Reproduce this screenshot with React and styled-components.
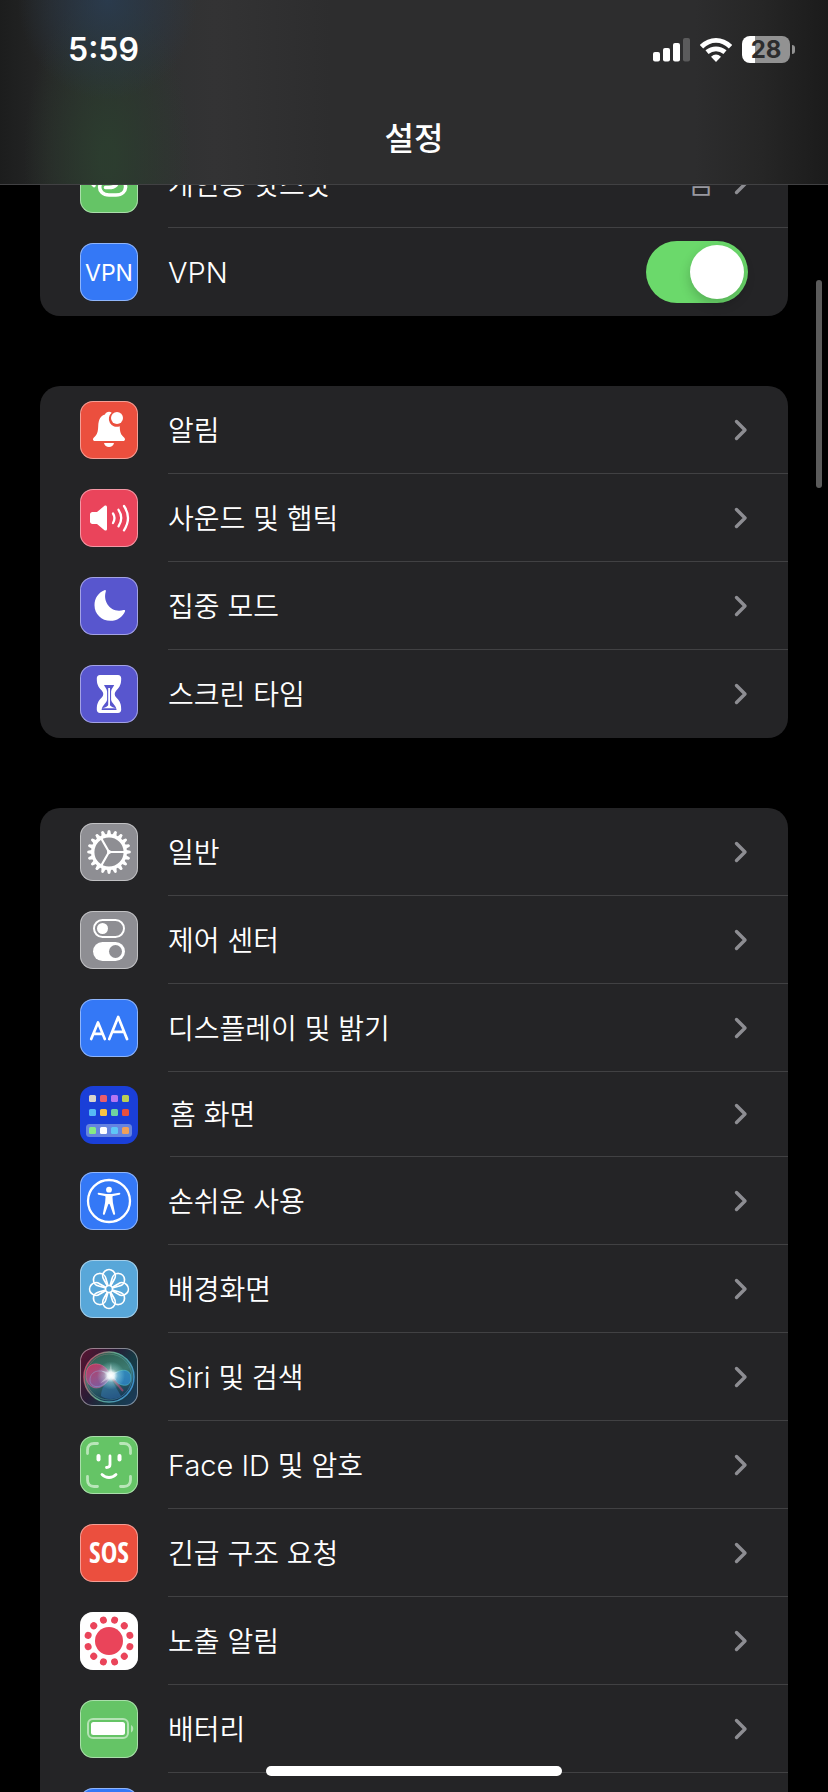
import styled, { createGlobalStyle } from "styled-components";
import { useState } from "react";

const GlobalStyle = createGlobalStyle`
  * {
    box-sizing: border-box;
  }
  body {
    margin: 0;
    background-color: #000;
    color: #fff;
    font-family: Inter, "Noto Sans CJK KR", sans-serif;
  }
`
const Screen = styled.div`
  height: 100vh;
  overflow: hidden;
`
const Header = styled.header`
  position: fixed;
  top: 0;
  left: 0;
  right: 0;
  z-index: 2;
  border-bottom: solid 1px #414143;
  background:
    radial-gradient(ellipse 90px 100px at 13% 0, rgba(42, 60, 80, 0.9), transparent),
    radial-gradient(ellipse 84px 170px at 13% 86%, rgba(44, 62, 47, 0.9) 10%, transparent),
    linear-gradient(90deg, #1c1d1d 0, #262727 6%, #303132 20%, #333334 26%, #2d2d2e 40%, #2d2d2e 84%, #262626 92%, #1b1b1b 100%);
`
const StatusBar = styled.div`
  display: flex;
  align-items: center;
  justify-content: space-between;
  height: 99px;
  padding: 0 33px 0 68px;
`
const Time = styled.time`
  font-size: 32px;
  font-weight: 600;
`
const StatusIcons = styled.div`
  display: flex;
  align-items: center;
  gap: 10px;
`
const BatteryLevel = styled.div`
  display: flex;
  align-items: center;
  gap: 2px;
`
const BatteryBox = styled.div`
  display: flex;
  align-items: center;
  justify-content: center;
  width: 48px;
  height: 27px;
  border-radius: 8px;
  background: linear-gradient(90deg, #fff 28%, #929292 28%);
  color: #2c2c2d;
  font-size: 24px;
  font-weight: 700;
  line-height: 27px;
`
const BatteryNub = styled.div`
  width: 3px;
  height: 9px;
  border-radius: 0 4px 4px 0;
  background-color: #929292;
`
const Title = styled.h1`
  margin: 0;
  padding-bottom: 5px;
  font-size: 32px;
  font-weight: 500;
  line-height: 80px;
  text-align: center;
`
const List = styled.main`
  height: 100%;
  overflow-y: auto;
  padding: 140px 40px 0;
  scrollbar-width: none;
`
const Group = styled.ul`
  margin: 0 0 70px;
  padding: 0;
  list-style: none;
  border-radius: 20px;
  background-color: #242426;
  overflow: hidden;
`
const Row = styled.li`
  .row {
    display: flex;
    align-items: center;
    gap: ${(props) => (props.$compact ? "32px" : "30px")};
    height: ${(props) => (props.$compact ? "85px" : "88px")};
    padding-left: 40px;
    color: inherit;
    text-decoration: none;
  }
  &:last-child .body {
    border-bottom-color: transparent;
  }
`
const Body = styled.span`
  display: flex;
  align-items: center;
  gap: 20px;
  flex: 1;
  height: 100%;
  padding-right: 40px;
  border-bottom: solid 1px #414143;
`
const Label = styled.span`
  flex: 1;
  padding-top: 2px;
  font-size: 28px;
  font-weight: 350;
  line-height: 40px;
`
const Latin = styled.span`
  font-size: 29px;
`
const Value = styled.span`
  color: #98989f;
  font-size: 28px;
  font-weight: 350;
  line-height: 40px;
`
const Tile = styled.span`
  display: flex;
  width: 58px;
  height: 58px;
  border-radius: 13px;
  background: ${(props) => props.$bg};
  box-shadow: inset 0 0 0 1px ${(props) => (props.$plain ? "transparent" : "rgba(255, 255, 255, 0.45)")};
  overflow: hidden;
`
const Switch = styled.input`
  appearance: none;
  display: flex;
  align-items: center;
  width: 102px;
  height: 62px;
  margin: 0;
  padding: 4px;
  border-radius: 31px;
  background-color: ${(props) => (props.checked ? "#6bd96b" : "#39393d")};
  justify-content: ${(props) => (props.checked ? "flex-end" : "flex-start")};
  cursor: pointer;
  &::before {
    content: "";
    width: 54px;
    height: 54px;
    border-radius: 50%;
    background-color: #fff;
    box-shadow: 0 5px 12px rgba(0, 0, 0, 0.2);
  }
`
const ScrollThumb = styled.div`
  position: fixed;
  top: 280px;
  right: 6px;
  z-index: 3;
  width: 6px;
  height: 208px;
  border-radius: 3px;
  background-color: #5b5b5b;
`
const HomeIndicator = styled.div`
  position: fixed;
  bottom: 16px;
  left: 50%;
  z-index: 3;
  width: 296px;
  height: 10px;
  margin-left: -148px;
  border-radius: 5px;
  background-color: #fff;
`

const Icon = ({ children }) => (
  <svg width="58" height="58" viewBox="0 0 58 58" fill="none" aria-hidden="true">{children}</svg>
)

const Hotspot = () => (
  <Icon>
    <g stroke="#fff" strokeWidth="3.600" strokeLinecap="round">
      <path d="M33 24H29C16.500 24 16.500 40 29 40H36C48.500 40 48.500 24 38 24" />
      <path d="M25.500 32.500H29C41.500 32.500 41.500 17 29 17H22C10.500 17 10 27 14 30.500" />
    </g>
  </Icon>
)
const VpnIcon = () => (
  <Icon>
    <text x="29" y="38" textAnchor="middle" fill="#fff" fontFamily="Inter, sans-serif" fontSize="23">VPN</text>
  </Icon>
)
const Bell = () => (
  <Icon>
    <path fill="#fff" d="M13 38.500c0-1.500 1-2.300 2.400-3.600 2.300-2.200 2.600-5.400 2.800-9.400C18.500 17.500 21 14.500 25 13.500c.6-1.800 2.300-2.700 4-2.700 1 0 2 .3 2.700.9a8 8 0 0 0 8 13.600c.2 4.700.6 7.500 2.900 9.600 1.400 1.300 2.400 2.100 2.400 3.600 0 .9-.7 1.500-1.800 1.500H14.800c-1.100 0-1.800-.6-1.800-1.500z" />
    <path fill="#fff" d="M24 42h10c-.6 2.500-2.500 4-5 4s-4.400-1.500-5-4z" />
    <circle cx="37" cy="17" r="6" fill="#fff" />
  </Icon>
)
const Speaker = () => (
  <Icon>
    <path fill="#fff" d="M12.500 23H17l7.500-6.200c1-.8 2.500-.3 2.500 1.200v22c0 1.500-1.500 2-2.500 1.200L17 35h-4.500c-1.500 0-2.500-1-2.500-2.500v-7c0-1.500 1-2.500 2.500-2.500z" />
    <g stroke="#fff" strokeWidth="2.300" strokeLinecap="round">
      <path d="M33 24.500q3 4.500 0 9.500" />
      <path d="M38.500 20.800q5.500 8 0 16.500" />
      <path d="M44 17q8 12 0 24.300" />
    </g>
  </Icon>
)
const Moon = () => (
  <Icon>
    <path fill="#fff" d="M24.500 13.200c.9-.4 1.700.4 1.300 1.300C22.500 25 31 36.500 43.500 33c1.300-.4 2 .3 1.500 1.400C42.500 40 37 43.800 30.500 43.800 21.500 43.800 14.500 37 14.500 28.200c0-6.900 3.900-12.700 10-15z" />
  </Icon>
)
const Hourglass = () => (
  <Icon>
    <path fill="#fff" d="M20 10h18c2 0 3.200 1.300 3.200 3.200 0 6-1.200 8.300-4.700 12-2.400 2.500-2.400 5.100 0 7.600 3.500 3.700 4.700 6 4.700 12 0 1.900-1.200 3.200-3.200 3.200H20c-2 0-3.200-1.300-3.200-3.200 0-6 1.200-8.300 4.700-12 2.400-2.500 2.400-5.100 0-7.600-3.500-3.700-4.700-6-4.700-12C16.800 11.300 18 10 20 10z" />
    <path fill="#5856ce" d="M24 20h10.200c-.8 2-2.900 3.500-3.100 6.500v8c.2 3.500 5 5.500 5.500 10.500H21.600c.5-5 5.300-7 5.500-10.500v-8C26.900 23.500 24.800 22 24 20z" />
    <path stroke="#fff" strokeWidth="1.800" d="M29.100 23v18" />
    <path fill="#fff" d="M22 43.300c3-.5 5.500-1.800 7.100-3.800 1.600 2 4.100 3.300 7.100 3.800z" />
  </Icon>
)
const Gear = () => (
  <Icon>
    <circle cx="29" cy="29" r="16.300" stroke="#fff" strokeWidth="3.400" />
    {Array.from({ length: 20 }, (_, i) => (
      <path key={i} fill="#fff" transform={`rotate(${i * 18} 29 29)`} d="M45.500 26.700l4.700 1q1.600 1.300 0 2.600l-4.700 1z" />
    ))}
    <path stroke="#fff" strokeWidth="2.200" d="M29 29h16M29 29l-8-14M29 29l-8 14" />
    <circle cx="29" cy="29" r="2" fill="#fff" />
  </Icon>
)
const Controls = () => (
  <Icon>
    <rect x="14" y="9" width="30" height="17" rx="8.500" stroke="#fff" strokeWidth="2" />
    <circle cx="22.500" cy="17.500" r="5.500" fill="#fff" />
    <rect x="13" y="31" width="32" height="19" rx="9.500" fill="#fff" />
    <circle cx="35.500" cy="40.500" r="6.500" fill="#8e8e93" />
  </Icon>
)
const TextSize = () => (
  <Icon>
    <g stroke="#fff" strokeLinecap="round" strokeLinejoin="round" strokeWidth="2.700">
      <path d="M11.200 40l6.800-16.500L24.800 40M13.400 34.800h9.200" />
      <path d="M29.300 40L38.200 18l8.800 22M32.300 32.800h11.800" />
    </g>
  </Icon>
)
const dots = [
  ["#d9d5cc", "#e85d6c", "#b476f2", "#b9cf55"],
  ["#56b9f5", "#f7c244", "#6fd3a0", "#e84f3d"],
  ["#86e985", "#fff", "#5ec5f7", "#f0a05a"],
]
const HomeScreen = () => (
  <Icon>
    <rect x="6" y="38" width="46" height="13" rx="3.500" fill="#6684e0" />
    {dots.map((line, y) => line.map((color, x) => (
      <rect key={color} x={9 + x * 11} y={[9, 23, 41][y]} width="7" height="7" rx="1.500" fill={color} />
    )))}
  </Icon>
)
const Accessibility = () => (
  <Icon>
    <circle cx="29" cy="29" r="21" stroke="#fff" strokeWidth="2.300" />
    <circle cx="29" cy="17.700" r="2.900" fill="#fff" />
    <path fill="#fff" d="M18.700 20.800l7.500 1.100q2.800.3 5.600 0l7.500-1.100c1.300-.1 1.400 1.600.2 1.900l-6.200 1.200c-.8.200-.9.600-.8 1.500l.4 5 2.200 11c.3 1.500-1.500 1.900-2 .5l-3.300-9.500q-.8-1.200-1.600 0l-3.300 9.500c-.5 1.400-2.300 1-2-.5l2.200-11 .4-5c.1-.9 0-1.300-.8-1.500l-6.200-1.200c-1.200-.3-1.100-2 .2-1.900z" />
  </Icon>
)
// eight petals, each a full loop from the hub
const Flower = () => (
  <Icon>
    {Array.from({ length: 8 }, (_, i) => (
      <path key={i} stroke="#fff" strokeWidth="1.700" transform={`rotate(${i * 45} 29 29)`} d="M27.500 26L23.800 19.500A6.300 6.300 0 1 1 34.200 19.500L30.500 26" />
    ))}
    <circle cx="29" cy="29" r="3.500" stroke="#fff" strokeWidth="1.700" />
  </Icon>
)
const Siri = () => (
  <Icon>
    <defs>
      <radialGradient id="glow">
        <stop offset="0" stopColor="#fff" />
        <stop offset="0.250" stopColor="#f2fdff" stopOpacity="0.900" />
        <stop offset="0.500" stopColor="#c8f0f0" stopOpacity="0.400" />
        <stop offset="1" stopColor="#9ff" stopOpacity="0" />
      </radialGradient>
      <linearGradient id="ring" x1="0" y1="0.300" x2="1" y2="0.700">
        <stop offset="0" stopColor="#c24a68" />
        <stop offset="0.450" stopColor="#5fa88c" />
        <stop offset="1" stopColor="#3d8fd0" />
      </linearGradient>
      <linearGradient id="orb" x1="0.300" y1="0" x2="0.600" y2="1">
        <stop offset="0" stopColor="#2c5c4e" />
        <stop offset="0.450" stopColor="#3c7a70" />
        <stop offset="1" stopColor="#122f52" />
      </linearGradient>
      <linearGradient id="lobe" x1="0" y1="0" x2="0.500" y2="1">
        <stop offset="0" stopColor="#d8305c" />
        <stop offset="1" stopColor="#8a5aa8" />
      </linearGradient>
    </defs>
    <circle cx="29" cy="29" r="25" fill="url(#orb)" stroke="url(#ring)" strokeWidth="1.500" />
    <circle cx="29" cy="29" r="23" stroke="url(#ring)" strokeOpacity="0.500" />
    <path fill="#3c86cf" fillOpacity="0.400" d="M30 29c-5 6-9 12-9 19 5 4 14 4 20 0z" />
    <path fill="url(#lobe)" fillOpacity="0.850" stroke="#e8809a" strokeOpacity="0.500" strokeWidth="0.800" d="M31 28C25 12 6 12 6 27s16 19 25 1z" />
    <path stroke="#8fa8e0" strokeOpacity="0.600" strokeWidth="0.800" d="M31 28C21 19 10 23 10 32s14 10 21-4z" />
    <path fill="#2f8fd8" fillOpacity="0.700" stroke="#58d0d8" strokeOpacity="0.600" strokeWidth="0.800" d="M31 28c7-7 20-9 20 2s-13 9-20-2z" />
    <path stroke="#c24a78" strokeOpacity="0.600" strokeWidth="2" d="M32 30l11 13" />
    <circle cx="31" cy="27.500" r="14" fill="url(#glow)" />
    <path fill="#fff" fillOpacity="0.350" d="M31 15l1 9.500 7-1-6 3.500 4 6-6-3.500-11 6 8-8-7-5 8 2z" />
  </Icon>
)
const FaceId = () => (
  <Icon>
    <path stroke="#b9e6b9" strokeWidth="2.800" strokeLinecap="round" d="M7.500 17.500v-3.500c0-4 2.500-6.500 6.500-6.500h3.500M40.500 7.500H44c4 0 6.500 2.500 6.500 6.500v3.500M50.500 40.500V44c0 4-2.500 6.500-6.500 6.500h-3.500M17.500 50.500H14c-4 0-6.500-2.500-6.500-6.500v-3.500" />
    <rect x="16.500" y="18" width="4" height="7.500" rx="2" fill="#fff" />
    <rect x="37.500" y="18" width="4" height="7.500" rx="2" fill="#fff" />
    <path stroke="#fff" strokeWidth="2.800" strokeLinecap="round" d="M30 20v8.500c0 2-1 3-3.500 3M22 38.500c4 4 10 4 14 0" />
  </Icon>
)
const Sos = () => (
  <Icon>
    <text x="29" y="39" textAnchor="middle" fill="#fff" fontFamily="'Open Sans Condensed', 'Liberation Sans Narrow', Roboto, sans-serif" fontSize="28" fontWeight="700">SOS</text>
  </Icon>
)
const Exposure = () => (
  <Icon>
    <g fill="#ea445a">
      <circle cx="29" cy="29" r="14" />
      {Array.from({ length: 12 }, (_, i) => (
        <circle key={i} cx="50.600" cy="29" r="3.500" transform={`rotate(${i * 30 + 15} 29 29)`} />
      ))}
    </g>
  </Icon>
)
const Battery = () => (
  <Icon>
    <rect x="8" y="19" width="40" height="19" rx="5" stroke="#b5e3b5" strokeWidth="2" />
    <rect x="11" y="22" width="34" height="13" rx="2.500" fill="#fff" />
    <path fill="#b5e3b5" d="M51 25c3 1.500 3 6 0 7.500z" />
  </Icon>
)
const Privacy = () => <Icon><path fill="#fff" d="M22 20h14v22H22z" /></Icon>

const Chevron = () => (
  <svg width="14" height="22" viewBox="0 0 14 22" fill="none" stroke="#8d8d92" strokeWidth="3.400" strokeLinecap="round" strokeLinejoin="round" aria-hidden="true">
    <path d="M2.500 2.500L11 11l-8.500 8.500" />
  </svg>
)

const siriBg = "linear-gradient(120deg, #5c1330 0, #281c35 40%, #163a44 65%, #1c3a5c 100%)"

const alerts = [
  { name: "알림", bg: "#eb4f3e", icon: <Bell /> },
  { name: "사운드 및 햅틱", bg: "#ea445b", icon: <Speaker /> },
  { name: "집중 모드", bg: "#5856ce", icon: <Moon /> },
  { name: "스크린 타임", bg: "#5856ce", icon: <Hourglass /> },
]
const general = [
  { name: "일반", bg: "#8e8e93", icon: <Gear /> },
  { name: "제어 센터", bg: "#8e8e93", icon: <Controls /> },
  { name: "디스플레이 및 밝기", bg: "#3478f6", icon: <TextSize /> },
  { name: "홈 화면", bg: "#1a3fd8", icon: <HomeScreen />, compact: true },
  { name: "손쉬운 사용", bg: "#3478f6", icon: <Accessibility /> },
  { name: "배경화면", bg: "#58a7d9", icon: <Flower /> },
  { latin: "Siri", name: " 및 검색", bg: siriBg, icon: <Siri /> },
  { latin: "Face ID", name: " 및 암호", bg: "#65c466", icon: <FaceId /> },
  { name: "긴급 구조 요청", bg: "#eb4f3e", icon: <Sos /> },
  { name: "노출 알림", bg: "#fff", icon: <Exposure /> },
  { name: "배터리", bg: "#65c466", icon: <Battery /> },
  { aria: "개인정보 보호 및 보안", bg: "#3478f6", icon: <Privacy /> },
]

const LinkRow = ({ item }) => (
  <Row $compact={item.compact}>
    <a className="row" href="#" aria-label={item.aria}>
      <Tile $bg={item.bg} $plain={item.compact}>{item.icon}</Tile>
      <Body className="body">
        <Label>{item.latin && <Latin>{item.latin}</Latin>}{item.name}</Label>
        {item.value && <Value>{item.value}</Value>}
        <Chevron />
      </Body>
    </a>
  </Row>
)

const App = () => {
  const [vpn, setVpn] = useState(true);

  return (
    <Screen>
      <GlobalStyle />
      <Header>
        <StatusBar>
          <Time>5:59</Time>
          <StatusIcons>
            <svg width="37" height="24" viewBox="0 0 37 24" fill="#fff" aria-hidden="true">
              <rect y="14" width="7" height="9.500" rx="2" />
              <rect x="10" y="10" width="7" height="13.500" rx="2" />
              <rect x="20" y="5" width="7" height="18.500" rx="2" />
              <rect x="30" width="7" height="23.500" rx="2" fill="#5b5b5c" />
            </svg>
            <svg width="32" height="24" viewBox="0 0 32 24" fill="none" stroke="#fff" strokeWidth="4.800" aria-hidden="true">
              <path d="M1.500 8.700Q8 2.400 16 2.400T30.500 8.700" />
              <path d="M7 14.200Q11 10.900 16 10.900T25 14.200" />
              <path d="M11 18.700q5-4.400 10 0L16 23.900z" fill="#fff" stroke="none" />
            </svg>
            <BatteryLevel>
              <BatteryBox>28</BatteryBox>
              <BatteryNub />
            </BatteryLevel>
          </StatusIcons>
        </StatusBar>
        <Title>설정</Title>
      </Header>
      <List>
        <Group>
          <LinkRow item={{ name: "개인용 핫스팟", value: "끔", bg: "#65c466", icon: <Hotspot /> }} />
          <Row>
            <label className="row" htmlFor="vpn">
              <Tile $bg="#3478f6"><VpnIcon /></Tile>
              <Body className="body">
                <Label><Latin>VPN</Latin></Label>
                <Switch type="checkbox" role="switch" id="vpn" checked={vpn} onChange={(e) => setVpn(e.target.checked)} />
              </Body>
            </label>
          </Row>
        </Group>
        <Group>
          {alerts.map((item) => <LinkRow key={item.name} item={item} />)}
        </Group>
        <Group>
          {general.map((item) => <LinkRow key={item.name || item.aria} item={item} />)}
        </Group>
      </List>
      <ScrollThumb />
      <HomeIndicator />
    </Screen>
  )
}

export default App;
